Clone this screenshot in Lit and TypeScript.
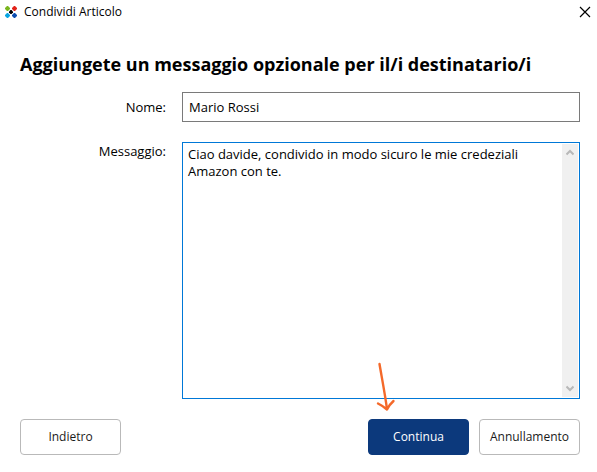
import { LitElement, html, css } from "lit";
import { customElement, state } from "lit/decorators.js";

@customElement("app-root")
export class AppRoot extends LitElement {
  static styles = css`
    :host {
      display: block;
      background: #fff;
      color: #000;
      font-family: "Open Sans", "Noto Sans", sans-serif;
      font-size: 13px;
      line-height: 18px;
    }
    *, *::before, *::after { box-sizing: border-box; }
    .dialog {
      display: flex;
      flex-direction: column;
      min-height: 100vh;
    }
    .titlebar {
      display: flex;
      align-items: center;
      gap: 6px;
      height: 24px;
      padding: 0 6px 0 5px;
    }
    .logo { width: 13px; height: 12px; flex: none; }
    .title { flex: 1; font-size: 12px; }
    .close {
      display: flex;
      padding: 0;
      border: 0;
      background: none;
    }
    .close svg { width: 12px; height: 12px; }
    .content {
      display: flex;
      flex: 1;
      flex-direction: column;
      padding: 28px 17px 17px 20px;
    }
    h1 {
      margin: 0 0 16px;
      font-size: 18px;
      line-height: 24px;
      font-weight: 700;
      white-space: nowrap;
    }
    .form {
      display: grid;
      flex: 1;
      grid-template-columns: 146px minmax(0, 1fr);
      grid-template-rows: auto 1fr;
      gap: 20px 16px;
    }
    label { text-align: right; }
    .name-label { padding-top: 6px; }
    input, textarea {
      display: block;
      width: 100%;
      margin: 0;
      background: #fff;
      color: #000;
      font: inherit;
      border-radius: 0;
      outline: 0;
    }
    input {
      height: 30px;
      padding: 0 6px;
      border: 1px solid #7a7a7a;
    }
    .area { position: relative; display: flex; min-height: 120px; }
    textarea {
      padding: 3px 24px 3px 5px;
      border: 1px solid #0078d7;
      line-height: 17px;
      resize: none;
      overflow: hidden;
    }
    .scroll {
      position: absolute;
      top: 2px;
      right: 2px;
      bottom: 2px;
      width: 16px;
      display: flex;
      flex-direction: column;
      justify-content: space-between;
      align-items: center;
      padding: 5px 0;
      background: #f0f0f0;
    }
    .scroll svg { width: 8px; height: 7px; }
    .actions {
      display: flex;
      gap: 10px;
      margin-top: 20px;
    }
    .btn {
      width: 101px;
      height: 36px;
      padding: 0;
      border: 1px solid #b9b9b9;
      border-radius: 4px;
      background: #fff;
      color: #1a1a1a;
      font: inherit;
      font-size: 12px;
    }
    .back { margin-right: auto; }
    .next { position: relative; }
    .primary {
      border-color: #0c397c;
      background: #0c397c;
      color: #fff;
    }
    .pointer {
      position: absolute;
      left: 8px;
      bottom: 43px;
      width: 20px;
      height: 50px;
      pointer-events: none;
    }
  `;

  @state() private name = "Mario Rossi";
  @state() private message =
    "Ciao davide, condivido in modo sicuro le mie credeziali Amazon con te.";

  render() {
    return html`
      <div class="dialog">
        <header class="titlebar">
          <svg class="logo" viewBox="0 0 13 12" aria-hidden="true">
            <path fill="#7ab51d" d="M2 0H3L5 2V3L3 5H2L0 3V2Z" />
            <path fill="#e2231a" d="M9 0H10L12 2V3L10 5H9L7 3V2Z" />
            <path fill="#0aa5e2" d="M2 7H3L5 9V10L3 12H2L0 10V9Z" />
            <path fill="#0b4db0" d="M9 7H10L12 9V10L10 12H9L7 10V9Z" />
            <path fill="#000" d="M5.500 4H6.500L8 5.500V6.500L6.500 8H5.500L4 6.500V5.500Z" />
          </svg>
          <span class="title">Condividi Articolo</span>
          <button class="close" aria-label="Chiudi">
            <svg viewBox="0 0 12 12"><path d="M1 1 11 11M11 1 1 11" stroke="#000" stroke-width="1.200" /></svg>
          </button>
        </header>
        <main class="content">
          <h1>Aggiungete un messaggio opzionale per il/i destinatario/i</h1>
          <div class="form">
            <label class="name-label" for="name">Nome:</label>
            <input id="name" type="text" .value=${this.name} />
            <label for="message">Messaggio:</label>
            <div class="area">
              <textarea id="message" .value=${this.message}></textarea>
              <div class="scroll" aria-hidden="true">
                <svg viewBox="0 0 8 7"><path d="M.5 5.500 4 2 7.500 5.500" fill="none" stroke="#b8b8b8" stroke-width="2" /></svg>
                <svg viewBox="0 0 8 7"><path d="M.5 1.500 4 5 7.500 1.500" fill="none" stroke="#b8b8b8" stroke-width="2" /></svg>
              </div>
            </div>
          </div>
          <footer class="actions">
            <button class="btn back">Indietro</button>
            <div class="next">
              <button class="btn primary">Continua</button>
              <svg class="pointer" viewBox="0 0 20 50" aria-hidden="true">
                <path d="M3.500 2 C5.500 14 9 32 11 47 M2 41.500 Q7 44 11 47.500 Q13 43 17.500 39" fill="none" stroke="#f4692a" stroke-width="2.400" stroke-linecap="round" stroke-linejoin="round" />
              </svg>
            </div>
            <button class="btn">Annullamento</button>
          </footer>
        </main>
      </div>
    `;
  }
}
